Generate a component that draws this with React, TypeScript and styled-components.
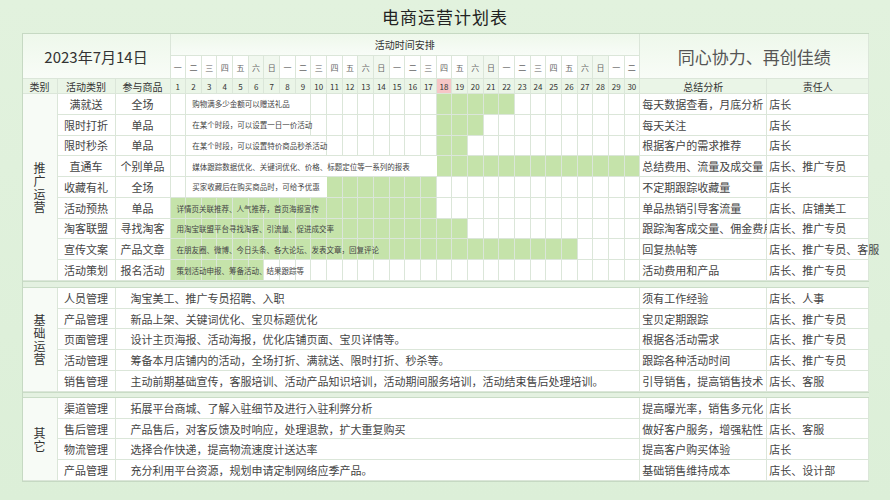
import React from "react";
import styled, { createGlobalStyle, css } from "styled-components";

const Global = createGlobalStyle`
  html,body{margin:0;padding:0;}
  body{width:890px;height:500px;overflow:hidden;background:linear-gradient(180deg,#e2f2de 0%,#dcefd8 100%);
    font-family:"Noto Sans CJK SC","Noto Sans",sans-serif;color:#333;}
`;

const Page = styled.div`
  width: 890px; height: 500px; display: flex; flex-direction: column; align-items: center;
`;
const Title = styled.div`
  height: 33px; line-height: 33px; font-size: 17px; color: #222; letter-spacing: 1px;
`;
const Grid = styled.div`
  display: grid;
  grid-template-columns: 35px 58px 55px repeat(30, 15.667px) 127px 102px;
  grid-template-rows: 22px 23px 15px repeat(9, 20.78px) 7px repeat(5, 20.8px) 6px repeat(4, 20.75px);
  border: 1px solid #c6d9c3;
  background: #fff;
  width: 847px;
  box-sizing: border-box;
`;
const Cell = styled.div<{ $bg?: string; $align?: string; $size?: number; $color?: string; $pl?: number }>`
  box-sizing: border-box;
  border-right: 1px solid #dbe6d9;
  border-bottom: 1px solid #dbe6d9;
  display: flex; align-items: center;
  justify-content: ${(p) => p.$align || "center"};
  padding-left: ${(p) => p.$pl || 0}px;
  background: ${(p) => p.$bg || "#fff"};
  font-size: ${(p) => p.$size || 11}px;
  color: ${(p) => p.$color || "#444"};
  white-space: nowrap; overflow: visible;
  min-width: 0;
`;
const HeadTop = styled(Cell)`
  background: linear-gradient(180deg,#eef8eb,#f8fcf7);
`;
const Vertical = styled.div`
  box-sizing: border-box;
  border-right: 1px solid #dbe6d9;
  border-bottom: 1px solid #dbe6d9;
  background: #f7fbf6;
  display: flex; flex-direction: column; align-items: center; justify-content: center;
  font-size: 12px; line-height: 13px; color: #333;
`;
const Sep = styled.div`
  grid-column: 1 / -1;
  background: #e4f1e1;
  border-top: 1px solid #c9dcc6;
  border-bottom: 1px solid #c9dcc6;
  box-sizing: border-box;
`;
const Label = styled.div<{ $white?: boolean }>`
  font-size: 7.5px; color: #444; display: flex; align-items: center;
  padding-left: 6px; white-space: nowrap; z-index: 1;
  ${(p) => p.$white && css`background: #fff; border-bottom: 1px solid #dbe6d9;`}
  box-sizing: border-box;
`;

const wk = ["一", "二", "三", "四", "五", "六", "日"];
const days = Array.from({ length: 30 }, (_, i) => i + 1);
const GREEN = "#c5e3aa";

type G = { a: string; b: string; label: string; labelEnd: number; white: boolean; g: [number, number]; s: string; r: string };
const promo: G[] = [
  { a: "满就送", b: "全场", label: "购物满多少金额可以赠送礼品", labelEnd: 8, white: true, g: [18, 22], s: "每天数据查看，月底分析", r: "店长" },
  { a: "限时打折", b: "单品", label: "在某个时段，可以设置一日一价活动", labelEnd: 8, white: true, g: [18, 20], s: "每天关注", r: "店长" },
  { a: "限时秒杀", b: "单品", label: "在某个时段，可以设置特价商品秒杀活动", labelEnd: 9, white: true, g: [18, 19], s: "根据客户的需求推荐", r: "店长" },
  { a: "直通车", b: "个别单品", label: "媒体跟踪数据优化、关键词优化、价格、标题定位等一系列的报表", labelEnd: 17, white: true, g: [18, 30], s: "总结费用、流量及成交量", r: "店长、推广专员" },
  { a: "收藏有礼", b: "全场", label: "买家收藏后在购买商品时，可给予优惠", labelEnd: 10, white: true, g: [11, 17], s: "不定期跟踪收藏量", r: "店长" },
  { a: "活动预热", b: "单品", label: "详情页关联推荐、人气推荐，首页海报宣传", labelEnd: 10, white: false, g: [1, 17], s: "单品热销引导客流量", r: "店长、店铺美工" },
  { a: "淘客联盟", b: "寻找淘客", label: "用淘宝联盟平台寻找淘客、引流量、促进成交率", labelEnd: 12, white: false, g: [1, 19], s: "跟踪淘客成交量、佣金费用", r: "店长、推广专员" },
  { a: "宣传文案", b: "产品文章", label: "在朋友圈、微博、今日头条、各大论坛、发表文章，回复评论", labelEnd: 20, white: false, g: [1, 26], s: "回复热帖等", r: "店长、推广专员、客服" },
  { a: "活动策划", b: "报名活动", label: "策划活动申报、筹备活动、结果跟踪等", labelEnd: 10, white: false, g: [1, 6], s: "活动费用和产品", r: "店长、推广专员" },
];
const basic = [
  ["人员管理", "淘宝美工、推广专员招聘、入职", "须有工作经验", "店长、人事"],
  ["产品管理", "新品上架、关键词优化、宝贝标题优化", "宝贝定期跟踪", "店长、推广专员"],
  ["页面管理", "设计主页海报、活动海报，优化店铺页面、宝贝详情等。", "根据各活动需求", "店长、推广专员"],
  ["活动管理", "筹备本月店铺内的活动，全场打折、满就送、限时打折、秒杀等。", "跟踪各种活动时间", "店长、推广专员"],
  ["销售管理", "主动前期基础宣传，客服培训、活动产品知识培训，活动期间服务培训，活动结束售后处理培训。", "引导销售，提高销售技术", "店长、客服"],
];
const other = [
  ["渠道管理", "拓展平台商城、了解入驻细节及进行入驻利弊分析", "提高曝光率，销售多元化", "店长"],
  ["售后管理", "产品售后，对客反馈及时响应，处理退款，扩大重复购买", "做好客户服务，增强粘性", "店长、客服"],
  ["物流管理", "选择合作快递，提高物流速度计送达率", "提高客户购买体验", "店长"],
  ["产品管理", "充分利用平台资源，规划申请定制网络应季产品。", "基础销售维持成本", "店长、设计部"],
];

const at = (c: string, r: string | number) => ({ gridColumn: c, gridRow: String(r) });

function Category({ name, rows }: { name: string; rows: string }) {
  return (
    <Vertical style={at("1", rows)}>
      {name.split("").map((ch, i) => <span key={i}>{ch}</span>)}
    </Vertical>
  );
}

function TextSection({ rows, start, name }: { rows: string[][]; start: number; name: string }) {
  return (
    <>
      <Category name={name} rows={`${start} / span ${rows.length}`} />
      {rows.map((r, i) => (
        <React.Fragment key={i}>
          <Cell style={at("2", start + i)}>{r[0]}</Cell>
          <Cell style={at("3 / 34", start + i)} $align="flex-start" $pl={15}>{r[1]}</Cell>
          <Cell style={at("34", start + i)} $align="flex-start" $pl={2}>{r[2]}</Cell>
          <Cell style={at("35", start + i)} $align="flex-start" $pl={2}>{r[3]}</Cell>
        </React.Fragment>
      ))}
    </>
  );
}

export default function App() {
  return (
    <Page>
      <Global />
      <Title>电商运营计划表</Title>
      <Grid>
        <HeadTop style={at("1 / 4", "1 / 3")} $size={15} $color="#333">2023年7月14日</HeadTop>
        <HeadTop style={at("4 / 34", 1)} $size={10} $color="#333">活动时间安排</HeadTop>
        <HeadTop style={at("34 / 36", "1 / 3")} $size={17} $color="#555">同心协力、再创佳绩</HeadTop>
        {days.map((d) => (
          <Cell key={"w" + d} style={at(String(d + 3), 2)} $size={8} $color="#666"
            $bg={d % 7 === 6 || d % 7 === 0 ? "#f1f8ef" : "#fff"}>{wk[(d - 1) % 7]}</Cell>
        ))}
        <Cell style={at("1", 3)} $bg="#eaf5e7" $size={10} $color="#333">类别</Cell>
        <Cell style={at("2", 3)} $bg="#eaf5e7" $size={10} $color="#333">活动类别</Cell>
        <Cell style={at("3", 3)} $bg="#eaf5e7" $size={10} $color="#333">参与商品</Cell>
        {days.map((d) => (
          <Cell key={"d" + d} style={at(String(d + 3), 3)} $size={8} $color="#333" $bg={d === 18 ? "#f6c6c6" : "#eaf5e7"}>{d}</Cell>
        ))}
        <Cell style={at("34", 3)} $bg="#eaf5e7" $size={10} $color="#333">总结分析</Cell>
        <Cell style={at("35", 3)} $bg="#eaf5e7" $size={10} $color="#333">责任人</Cell>

        <Category name="推广运营" rows="4 / span 9" />
        {promo.map((p, i) => {
          const row = 4 + i;
          return (
            <React.Fragment key={p.a}>
              <Cell style={at("2", row)}>{p.a}</Cell>
              <Cell style={at("3", row)}>{p.b}</Cell>
              {days.map((d) => (
                <Cell key={d} style={at(String(d + 3), row)}
                  $bg={d >= p.g[0] && d <= p.g[1] ? GREEN : "#fff"} />
              ))}
              <Label $white={p.white} style={at(`${p.white ? 5 : 4} / ${p.labelEnd + 4}`, row)}>{p.label}</Label>
              <Cell style={at("34", row)} $align="flex-start" $pl={2}>{p.s}</Cell>
              <Cell style={at("35", row)} $align="flex-start" $pl={2}>{p.r}</Cell>
            </React.Fragment>
          );
        })}
        <Sep style={{ gridRow: "13" }} />
        <TextSection rows={basic} start={14} name="基础运营" />
        <Sep style={{ gridRow: "19" }} />
        <TextSection rows={other} start={20} name="其它" />
      </Grid>
    </Page>
  );
}
